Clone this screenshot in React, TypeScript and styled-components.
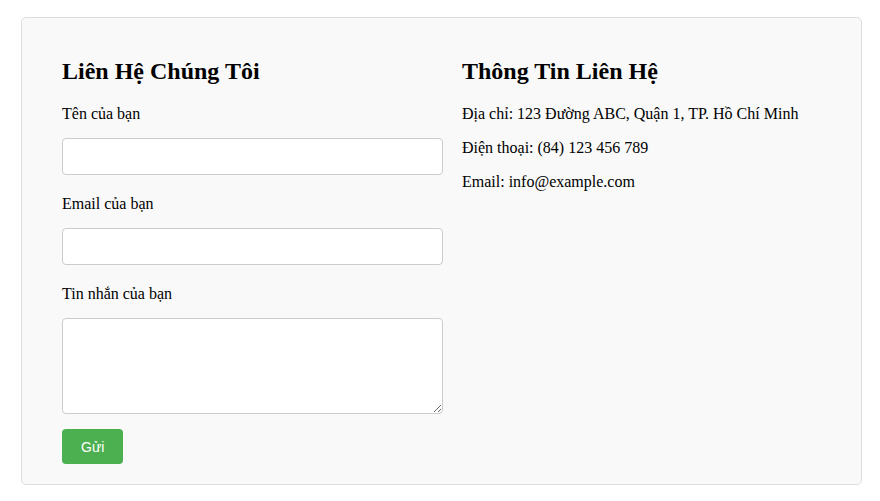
import React from "react";
import styled, { createGlobalStyle } from "styled-components";

const GlobalStyle = createGlobalStyle`
  body {
    margin: 0;
    background: #ffffff;
    font-family: "Liberation Serif", "Times New Roman", serif;
    color: #000;
  }
`;

const Container = styled.div`
  box-sizing: border-box;
  width: 841px;
  margin: 17px 0 0 21px;
  padding: 40px 40px 20px;
  background: #f9f9f9;
  border: 1px solid #ddd;
  border-radius: 5px;
  display: grid;
  grid-template-columns: 381px 1fr;
  column-gap: 19px;
`;

const Column = styled.section`
  display: flex;
  flex-direction: column;
`;

const Title = styled.h2`
  margin: 0 0 20px;
  font-size: 24px;
  font-weight: bold;
  line-height: 27px;
`;

const Form = styled.form`
  display: flex;
  flex-direction: column;
`;

const Group = styled.div`
  display: flex;
  flex-direction: column;
  margin-bottom: 20px;

  &:last-of-type {
    margin-bottom: 15px;
  }
`;

const Label = styled.label`
  font-size: 16px;
  line-height: 18px;
  margin-bottom: 15px;
`;

const Input = styled.input`
  box-sizing: border-box;
  width: 100%;
  height: 37px;
  padding: 10px;
  border: 1px solid #ccc;
  border-radius: 4px;
  background: #fff;
  font-size: 14px;
`;

const TextArea = styled.textarea`
  box-sizing: border-box;
  width: 100%;
  height: 96px;
  padding: 10px;
  border: 1px solid #ccc;
  border-radius: 4px;
  background: #fff;
  font-size: 14px;
  display: block;
`;

const SubmitButton = styled.button`
  align-self: flex-start;
  box-sizing: border-box;
  height: 35px;
  padding: 0 19px;
  border: none;
  border-radius: 4px;
  background: #4caf50;
  color: #fff;
  font-family: "Liberation Sans", Arial, sans-serif;
  font-size: 14px;
  cursor: pointer;
`;

const Info = styled.p`
  margin: 0 0 16px;
  font-size: 16px;
  line-height: 18px;
`;

export default function App() {
  return (
    <>
      <GlobalStyle />
      <Container>
        <Column>
          <Title>Liên Hệ Chúng Tôi</Title>
          <Form onSubmit={(e) => e.preventDefault()}>
            <Group>
              <Label htmlFor="name">Tên của bạn</Label>
              <Input id="name" type="text" />
            </Group>
            <Group>
              <Label htmlFor="email">Email của bạn</Label>
              <Input id="email" type="email" />
            </Group>
            <Group>
              <Label htmlFor="message">Tin nhắn của bạn</Label>
              <TextArea id="message" />
            </Group>
            <SubmitButton type="submit">Gửi</SubmitButton>
          </Form>
        </Column>
        <Column>
          <Title>Thông Tin Liên Hệ</Title>
          <Info>Địa chỉ: 123 Đường ABC, Quận 1, TP. Hồ Chí Minh</Info>
          <Info>Điện thoại: (84) 123 456 789</Info>
          <Info>Email: info@example.com</Info>
        </Column>
      </Container>
    </>
  );
}
